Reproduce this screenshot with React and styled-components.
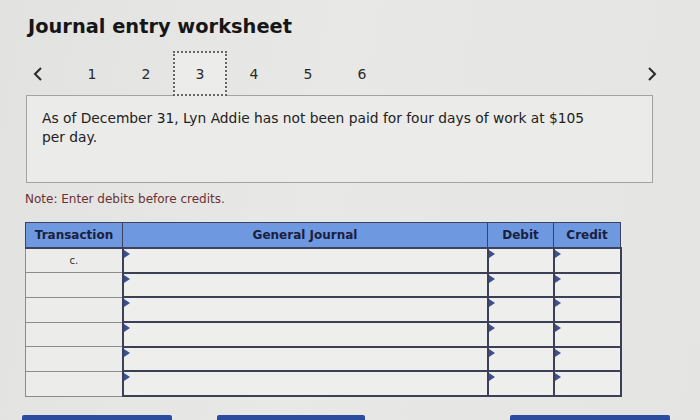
import React from "react";
import styled, { createGlobalStyle } from "styled-components";

const GlobalStyle = createGlobalStyle`
  html, body {
    margin: 0;
    padding: 0;
    background: #e5e5e3;
    overflow: hidden;
  }
  body {
    font-family: "DejaVu Sans", Verdana, sans-serif;
    color: #1e1e1e;
  }
`;

const Page = styled.div`
  width: 700px;
  height: 420px;
  box-sizing: border-box;
  padding: 14px 0 0 25px;
  background: linear-gradient(100deg, #e2e2e0 0%, #e8e8e6 45%, #e4e4e2 100%);
`;

const Title = styled.h1`
  margin: 0 0 0 3px;
  font-size: 19.4px;
  font-weight: bold;
  color: #161616;
  line-height: 26px;
`;

const Nav = styled.div`
  display: flex;
  align-items: center;
  width: 668px;
  margin: 11px 0 0 -14px;
  height: 45px;
`;

const Tab = styled.div`
  width: 54px;
  height: 45px;
  box-sizing: border-box;
  display: flex;
  align-items: center;
  justify-content: center;
  font-size: 14px;
  color: #2a2a2a;
  border: 2px dotted ${(p) => (p.active ? "#666" : "transparent")};
  background: ${(p) => (p.active ? "#ececea" : "transparent")};
  position: relative;
  z-index: 1;
`;

const Spacer = styled.div`
  flex: 1;
`;

const Chevron = styled.svg`
  width: 12px;
  height: 16px;
`;

const Prompt = styled.div`
  width: 627px;
  height: 88px;
  box-sizing: border-box;
  margin: -1px 0 0 1px;
  border: 1px solid #a3a3a1;
  background: #ebebe9;
  padding: 13px 15px;
  font-size: 13.8px;
  line-height: 19px;
  color: #222;
`;

const Note = styled.p`
  margin: 9px 0 0 0;
  font-size: 12px;
  color: #6b3035;
`;

const Table = styled.table`
  margin-top: 16px;
  border-collapse: collapse;
  width: 595px;
  table-layout: fixed;
`;

const Th = styled.th`
  height: 24px;
  padding: 0;
  background: #6e98df;
  border: 1px solid #3d4262;
  border-bottom: 2px solid #3d4262;
  font-size: 12px;
  font-weight: bold;
  color: #1a2040;
  text-align: center;
`;

const TxCell = styled.td`
  padding: 0;
  border: 1px solid #8c8c8c;
  background: #ececeb;
  font-size: 10px;
  color: #333;
  text-align: center;
  vertical-align: middle;
`;

const InputCell = styled.td`
  height: 22.7px;
  padding: 0;
  border: 2px solid #3b3f57;
  background: #eeeeed;
  position: relative;
`;

const Marker = styled.span`
  position: absolute;
  left: 0;
  top: 1px;
  width: 0;
  height: 0;
  border-top: 4px solid transparent;
  border-bottom: 4px solid transparent;
  border-left: 6px solid #3e4f8f;
`;

const Buttons = styled.div`
  display: flex;
  margin: 18px 0 0 -3px;
`;

const Button = styled.div`
  width: ${(p) => p.w}px;
  height: 30px;
  margin-left: ${(p) => p.ml}px;
  background: #2c4d9f;
  border-radius: 2px;
`;

function LeftChevron() {
  return (
    <Chevron viewBox="0 0 12 16">
      <path d="M9 2 L3 8 L9 14" fill="none" stroke="#2a2a2a" strokeWidth="2" />
    </Chevron>
  );
}

function RightChevron() {
  return (
    <Chevron viewBox="0 0 12 16">
      <path d="M3 2 L9 8 L3 14" fill="none" stroke="#2a2a2a" strokeWidth="2" />
    </Chevron>
  );
}

const rows = ["c.", "", "", "", "", ""];

export default function App() {
  return (
    <>
      <GlobalStyle />
      <Page>
        <Title>Journal entry worksheet</Title>
        <Nav>
          <Tab>
            <LeftChevron />
          </Tab>
          {[1, 2, 3, 4, 5, 6].map((n) => (
            <Tab key={n} active={n === 3}>
              {n}
            </Tab>
          ))}
          <Spacer />
          <Tab>
            <RightChevron />
          </Tab>
        </Nav>
        <Prompt>
          As of December 31, Lyn Addie has not been paid for four days of work at $105
          <br />
          per day.
        </Prompt>
        <Note>Note: Enter debits before credits.</Note>
        <Table>
          <colgroup>
            <col style={{ width: 97 }} />
            <col style={{ width: 365 }} />
            <col style={{ width: 66 }} />
            <col style={{ width: 67 }} />
          </colgroup>
          <thead>
            <tr>
              <Th>Transaction</Th>
              <Th>General Journal</Th>
              <Th>Debit</Th>
              <Th>Credit</Th>
            </tr>
          </thead>
          <tbody>
            {rows.map((t, i) => (
              <tr key={i}>
                <TxCell>{t}</TxCell>
                <InputCell>
                  <Marker />
                </InputCell>
                <InputCell>
                  <Marker />
                </InputCell>
                <InputCell>
                  <Marker />
                </InputCell>
              </tr>
            ))}
          </tbody>
        </Table>
        <Buttons>
          <Button w={150} ml={0} />
          <Button w={148} ml={45} />
          <Button w={160} ml={145} />
        </Buttons>
      </Page>
    </>
  );
}
